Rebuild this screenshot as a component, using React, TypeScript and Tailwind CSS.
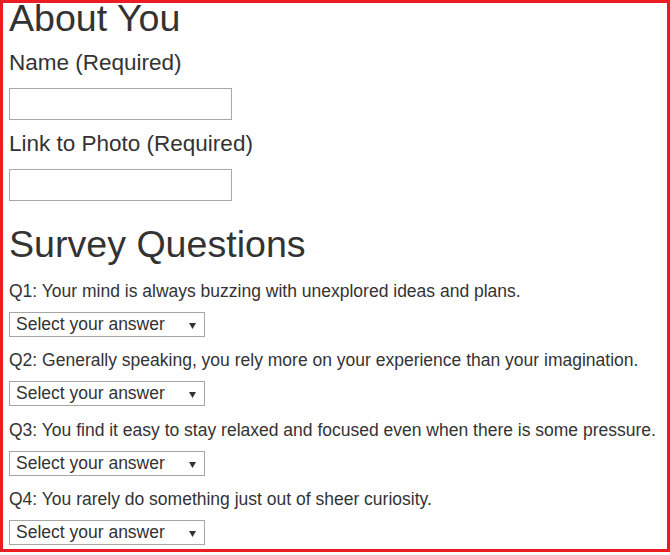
import React from "react";

const questions = [
  "Q1: Your mind is always buzzing with unexplored ideas and plans.",
  "Q2: Generally speaking, you rely more on your experience than your imagination.",
  "Q3: You find it easy to stay relaxed and focused even when there is some pressure.",
  "Q4: You rarely do something just out of sheer curiosity.",
];

function AnswerSelect() {
  return (
    <div className="relative mt-[11px] w-[196px]">
      <select
        defaultValue=""
        className="block h-[25px] w-[196px] appearance-none border border-[#a6a6a6] bg-white pl-[6px] text-[17.5px] leading-[23px] text-[#333333] outline-none"
      >
        <option value="">Select your answer</option>
        <option value="1">Strongly disagree</option>
        <option value="2">Disagree</option>
        <option value="3">Neutral</option>
        <option value="4">Agree</option>
        <option value="5">Strongly agree</option>
      </select>
      <svg
        className="pointer-events-none absolute right-[9px] top-[11px]"
        width="7"
        height="6"
        viewBox="0 0 7 6"
      >
        <path d="M0 0 H7 L3.5 6 Z" fill="#333333" />
      </svg>
    </div>
  );
}

export default function App() {
  return (
    <div
      className="h-[552px] w-[670px] border-[3px] border-[#ed1c24] bg-white pl-[6px] text-[#333333]"
      style={{ fontFamily: '"Liberation Sans", Arial, sans-serif' }}
    >
      <h1 className="text-[37.6px] leading-[31px] font-normal">About You</h1>
      <label className="mt-[16px] block text-[22.5px] leading-[25px]">Name (Required)</label>
      <input
        type="text"
        className="mt-[13px] block h-[32px] w-[223px] border border-[#a9a9a9] bg-white px-1 outline-none"
      />
      <label className="mt-[11px] block text-[22.5px] leading-[25px]">Link to Photo (Required)</label>
      <input
        type="text"
        className="mt-[13px] block h-[32px] w-[223px] border border-[#a9a9a9] bg-white px-1 outline-none"
      />
      <h1 className="mt-[28px] text-[37.6px] leading-[31px] font-normal">Survey Questions</h1>
      <div className="mt-[20.5px] flex flex-col gap-[13.5px]">
        {questions.map((q) => (
          <div key={q}>
            <p className="text-[17.5px] leading-[20px]">{q}</p>
            <AnswerSelect />
          </div>
        ))}
      </div>
    </div>
  );
}
